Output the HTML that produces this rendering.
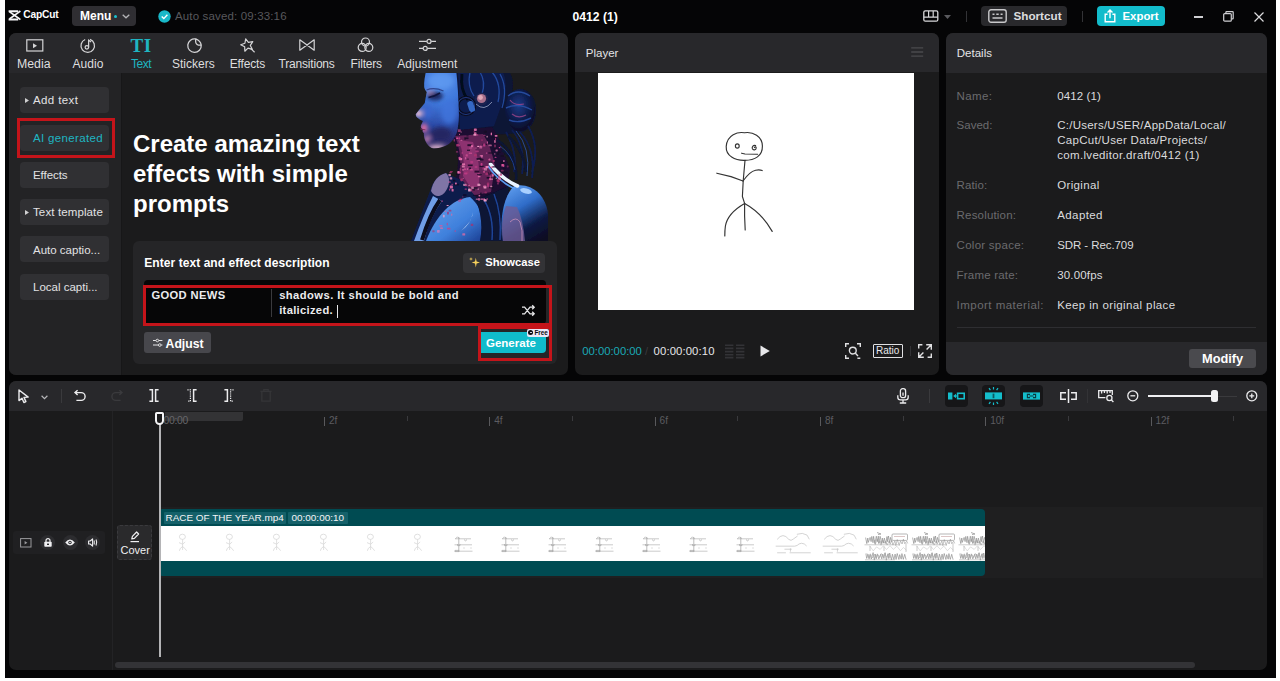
<!DOCTYPE html>
<html lang="en">
<head>
<meta charset="utf-8">
<title>CapCut - 0412 (1)</title>
<style>
*{box-sizing:border-box;margin:0;padding:0}
html,body{width:1280px;height:681px;overflow:hidden;background:#fff}
body{font-family:"Liberation Sans",sans-serif;color:#fff;position:relative}
#app{position:absolute;left:0;top:0;width:1280px;height:681px;overflow:hidden}
#bg{position:absolute;left:5px;top:0;width:1270.6px;height:677.6px;background:#050506}
.abs,.t,.p{position:absolute}
.t{white-space:nowrap;line-height:1;font-size:12px}
.b{font-weight:bold}
.p{background:#1c1c1c;border-radius:7px;overflow:hidden}
.hd{position:absolute;left:0;top:0;right:0;background:#28282b}
.cy{color:#19b8c4}
.g{color:#6b6b6e}
.btn{position:absolute;background:#303033;border-radius:4px}
svg{position:absolute;overflow:visible}
</style>
</head>
<body>
<div id="app">
<div id="bg"></div>
<!-- SECTION:TOPBAR -->
<svg style="left:8px;top:10px" width="13" height="10.6" viewBox="0 0 13 10.6"><path d="M0.6 1.2h9.6M0.6 9.4h9.6" stroke="#f4f4f6" stroke-width="2" fill="none"/><path d="M1.4 1.6 10.6 8.2 12.4 9.6M12.4 1 10.6 2.4 1.4 9" stroke="#f4f4f6" stroke-width="1.7" fill="none"/></svg>
<div class="t b" style="left:23.2px;top:9.6px;font-size:10.2px;letter-spacing:-0.15px">CapCut</div>
<div class="btn" style="left:72px;top:6.3px;width:63.6px;height:20px;background:#2f2e32"></div>
<div class="t b" style="left:80px;top:10.4px;font-size:12px">Menu</div>
<div class="abs" style="left:114px;top:15px;width:3px;height:3px;border-radius:2px;background:#19c3cf"></div>
<svg style="left:122px;top:14px" width="8" height="5" viewBox="0 0 8 5"><path d="M0.7 0.8 4 3.8 7.3 0.8" fill="none" stroke="#b5b5b8" stroke-width="1.3"/></svg>
<svg style="left:158px;top:10px" width="13" height="13" viewBox="0 0 13 13"><circle cx="6.5" cy="6.5" r="6.2" fill="#19b8c8"/><path d="M3.7 6.6 5.8 8.6 9.4 4.7" fill="none" stroke="#fff" stroke-width="1.4"/></svg>
<div class="t" style="left:175px;top:11px;font-size:11.5px;color:#58585c;letter-spacing:0.15px">Auto saved: 09:33:16</div>
<div class="t b" style="left:572.5px;top:11px;font-size:12.2px">0412 (1)</div>
<svg style="left:923px;top:10px" width="16" height="13" viewBox="0 0 16 13"><rect x="0.8" y="0.8" width="14" height="10.4" rx="1.5" fill="none" stroke="#d8d8da" stroke-width="1.3"/><path d="M0.8 7.2h14M5.6 1v6M10.2 1v6" stroke="#d8d8da" stroke-width="1.2"/></svg>
<svg style="left:944px;top:15px" width="7" height="4" viewBox="0 0 7 4"><path d="M0 0h7L3.5 4z" fill="#5a5a5e"/></svg>
<div class="abs" style="left:966px;top:11px;width:1px;height:11px;background:#333336"></div>
<div class="btn" style="left:981.4px;top:6.3px;width:86px;height:20.2px;background:#29292c"></div>
<svg style="left:988px;top:9px" width="19" height="14" viewBox="0 0 19 14"><rect x="0.8" y="0.8" width="17.4" height="12.4" rx="2.2" fill="none" stroke="#c8c8ca" stroke-width="1.4"/><path d="M4.5 5.2h2M8.3 5.2h2.4M12.6 5.2h2M4.5 9h10" stroke="#c8c8ca" stroke-width="1.4"/></svg>
<div class="t b" style="left:1013.5px;top:10.4px;font-size:11.7px;color:#dcdcde">Shortcut</div>
<div class="abs" style="left:1082px;top:11px;width:1px;height:11px;background:#333336"></div>
<div class="btn" style="left:1097px;top:6.3px;width:68px;height:20.2px;background:#12bccb"></div>
<svg style="left:1104px;top:9px" width="12" height="14" viewBox="0 0 12 14"><path d="M3.6 5.2H1.2v7.6h9.6V5.2H8.4M6 9.2V1.2M3.5 3.6 6 1.1 8.5 3.6" fill="none" stroke="#fff" stroke-width="1.4"/></svg>
<div class="t b" style="left:1122.5px;top:10.6px;font-size:11.4px">Export</div>
<div class="abs" style="left:1194px;top:16px;width:9px;height:1.5px;background:#cfcfd2"></div>
<svg style="left:1223px;top:11px" width="11" height="11" viewBox="0 0 11 11"><rect x="0.7" y="2.6" width="7.6" height="7.6" rx="1" fill="none" stroke="#cfcfd2" stroke-width="1.2"/><path d="M2.9 2.4V1.2q0-.6.6-.6h6q.7 0 .7.7v6q0 .6-.6.6H8.6" fill="none" stroke="#cfcfd2" stroke-width="1.2"/></svg>
<svg style="left:1254px;top:12px" width="10" height="10" viewBox="0 0 10 10"><path d="M0.5 0.5 9.5 9.5M9.5 0.5 0.5 9.5" stroke="#dcdcde" stroke-width="1.2"/></svg>
<!-- SECTION:LEFT -->
<div class="p" style="left:9px;top:33px;width:559px;height:342px;background:#1b1b1c">
<div class="hd" style="height:40px;background:#28282b"></div>
<div class="abs" style="left:0;top:40px;width:112px;height:302px;background:#232325"></div>
</div>
<div class="abs" style="left:120.5px;top:73px;width:1px;height:302px;background:#171718"></div>
<!-- tab icons -->
<svg style="left:26px;top:38.6px" width="18" height="14" viewBox="0 0 18 14"><rect x="0.8" y="0.8" width="16" height="11.2" fill="none" stroke="#d4d4d6" stroke-width="1.2"/><path d="M7 4.2v5l4-2.5z" fill="#d4d4d6"/></svg>
<svg style="left:80.3px;top:37.6px" width="15.6" height="15.6" viewBox="0 0 15 15"><path d="M9.6 1.3A6.5 6.5 0 1 1 5 1.4" fill="none" stroke="#d4d4d6" stroke-width="1.2"/><circle cx="6.6" cy="9" r="1.7" fill="none" stroke="#d4d4d6" stroke-width="1.2"/><path d="M8.3 9V2.2l2.4 1.6" fill="none" stroke="#d4d4d6" stroke-width="1.2"/></svg>
<div class="t cy" style="left:130.5px;top:35.5px;font-size:19px;font-weight:bold;font-family:'Liberation Serif',serif;letter-spacing:0.6px;color:#1fb5c2">TI</div>
<svg style="left:186.6px;top:37.8px" width="15" height="15" viewBox="0 0 14 14"><path d="M8.2 0.9A6.3 6.3 0 1 0 13.3 6.6Q12.6 2.6 8.2 0.9zM8.2 0.9Q7.6 5 9.4 6 11 7 13.3 6.6" fill="none" stroke="#d4d4d6" stroke-width="1.2" stroke-linejoin="round"/></svg>
<svg style="left:239.5px;top:37.5px" width="16" height="15" viewBox="0 0 16 15"><g transform="rotate(-14 7 7)"><path d="M7.2 0.8 9 4.8l4.4.4-3.3 3 1 4.3-3.9-2.2-3.8 2.2.9-4.3L1 5.2 5.4 4.8z" fill="none" stroke="#d4d4d6" stroke-width="1.2" stroke-linejoin="round"/></g><path d="M10.6 10.4 14.6 14.2" stroke="#d4d4d6" stroke-width="1.2"/></svg>
<svg style="left:299px;top:39px" width="16" height="12" viewBox="0 0 16 12"><path d="M0.8 0.8v10.4L15.2 0.8v10.4z" fill="none" stroke="#d4d4d6" stroke-width="1.2" stroke-linejoin="round"/></svg>
<svg style="left:357px;top:37px" width="17" height="16" viewBox="0 0 17 16"><circle cx="8.5" cy="5" r="4" fill="none" stroke="#d4d4d6" stroke-width="1.2"/><circle cx="5.2" cy="10.4" r="4" fill="none" stroke="#d4d4d6" stroke-width="1.2"/><circle cx="11.8" cy="10.4" r="4" fill="none" stroke="#d4d4d6" stroke-width="1.2"/></svg>
<svg style="left:419px;top:38px" width="17" height="14" viewBox="0 0 17 14"><path d="M0 3.4h7.8M12.2 3.4H17M0 10.4h4M8.4 10.4h8.600" stroke="#d4d4d6" stroke-width="1.2"/><circle cx="10" cy="3.4" r="2" fill="none" stroke="#d4d4d6" stroke-width="1.2"/><circle cx="6.2" cy="10.4" r="2" fill="none" stroke="#d4d4d6" stroke-width="1.2"/></svg>
<!-- tab labels -->
<div class="t" style="left:17px;top:57.5px;font-size:12.3px;color:#dededf">Media</div>
<div class="t" style="left:72.5px;top:57.5px;color:#dededf;letter-spacing:0.05px">Audio</div>
<div class="t" style="left:131px;top:57.5px;color:#1fb5c2;letter-spacing:-0.45px">Text</div>
<div class="t" style="left:172px;top:57.5px;color:#dededf">Stickers</div>
<div class="t" style="left:229.7px;top:57.5px;color:#dededf;letter-spacing:-0.15px">Effects</div>
<div class="t" style="left:278.6px;top:57.5px;color:#dededf;letter-spacing:-0.2px">Transitions</div>
<div class="t" style="left:350.6px;top:57.5px;color:#dededf;letter-spacing:-0.2px">Filters</div>
<div class="t" style="left:397.3px;top:57.5px;color:#dededf">Adjustment</div>
<!-- sidebar -->
<div class="btn" style="left:20px;top:87px;width:89px;height:26px"></div>
<div class="btn" style="left:20px;top:125px;width:89px;height:26px"></div>
<div class="btn" style="left:20px;top:162px;width:89px;height:26px"></div>
<div class="btn" style="left:20px;top:199px;width:89px;height:26px"></div>
<div class="btn" style="left:20px;top:236px;width:89px;height:26px"></div>
<div class="btn" style="left:20px;top:274px;width:89px;height:26px"></div>
<svg style="left:25px;top:98px" width="4" height="5" viewBox="0 0 4 5"><path d="M0 0 4 2.5 0 5z" fill="#d0d0d2"/></svg>
<svg style="left:25px;top:210px" width="4" height="5" viewBox="0 0 4 5"><path d="M0 0 4 2.5 0 5z" fill="#d0d0d2"/></svg>
<div class="t" style="left:33px;top:94.8px;font-size:11.5px;color:#e2e2e4;letter-spacing:0.38px">Add text</div>
<div class="t" style="left:33px;top:132.8px;font-size:11.5px;color:#1fb5c2;letter-spacing:0.34px">AI generated</div>
<div class="t" style="left:33px;top:169.8px;font-size:11.5px;color:#e2e2e4;letter-spacing:-0.07px">Effects</div>
<div class="t" style="left:33px;top:207.3px;font-size:11.5px;color:#e2e2e4;letter-spacing:0.12px">Text template</div>
<div class="t" style="left:33px;top:244.5px;font-size:11.5px;color:#e2e2e4">Auto captio...</div>
<div class="t" style="left:33px;top:282.0px;font-size:11.5px;color:#e2e2e4">Local capti...</div>
<div class="abs" style="left:16.5px;top:117.5px;width:98.6px;height:40.8px;border:3.2px solid #c4141a"></div>
<!-- hero -->
<div class="t b" style="left:133px;top:128.5px;font-size:24px;line-height:30px;white-space:normal;width:280px">Create amazing text effects with simple prompts</div>
<!-- HERO-IMG -->
<svg style="left:400px;top:73px;overflow:hidden" width="160" height="168.5" viewBox="400 73 160 168.5">
<defs>
<filter id="bl" x="-5%" y="-5%" width="110%" height="110%"><feGaussianBlur stdDeviation="0.7"/></filter>
<filter id="bl2" x="-20%" y="-20%" width="140%" height="140%"><feGaussianBlur stdDeviation="2.2"/></filter>
<radialGradient id="gFace" gradientUnits="userSpaceOnUse" cx="440" cy="82" r="70"><stop offset="0" stop-color="#5690ea"/><stop offset="0.3" stop-color="#4078dc"/><stop offset="0.62" stop-color="#2c4ca8"/><stop offset="0.85" stop-color="#2a2a6c"/><stop offset="1" stop-color="#3c2c66"/></radialGradient>
<linearGradient id="gSh" x1="0.3" y1="0" x2="0.8" y2="1"><stop offset="0" stop-color="#5a98ea"/><stop offset="0.35" stop-color="#2f6cc8"/><stop offset="0.7" stop-color="#0d1a44"/><stop offset="1" stop-color="#080c22"/></linearGradient>
<linearGradient id="gCh" x1="0" y1="0" x2="1" y2="1"><stop offset="0" stop-color="#6ca6ee"/><stop offset="0.6" stop-color="#3f80dc"/><stop offset="1" stop-color="#1a3c90"/></linearGradient>
<radialGradient id="gBun" cx="0.45" cy="0.4" r="0.65"><stop offset="0" stop-color="#1c3a86"/><stop offset="0.6" stop-color="#0c1a48"/><stop offset="1" stop-color="#060a1e"/></radialGradient>
<clipPath id="cF"><path d="M426.2 70c-1.2 6-2.4 11.5-2 17.2.3 1.8 1.4 3.4 2.6 4.8-.8 3.6-1.4 7.2-2 11-2.8 3.8-6.4 7.4-9 11.3-.3 2.6 2.4 4.6 7.1 6.7l-2 4.6c-.5 1.8.6 3.2 2.2 3.9-.9 1.3-.6 2.8.8 3.6-.2 3.5.6 6 1.8 8.3 1.3 2.8 3.2 5 6 6.6 5.8 1.2 12-1.2 17.2-4 3.4-2.6 6-6.6 7.8-11 2-8 2.6-16 2-24-.4-12-1-26-2.6-39z"/></clipPath>
</defs>
<g filter="url(#bl)">
<!-- head back -->
<path d="M452 70h56c5 6 6 14 4 22 10-7 23 0 24 16 1 15-8 25-21 25-10 2-24 2-34-3l-26 6z" fill="#0a1436"/>
<path d="M458 70h44c4 8 5 18 2 28l-10 28-34 4z" fill="#0e1d4e"/>
<ellipse cx="520" cy="110" rx="15" ry="21" fill="url(#gBun)"/>
<path d="M508 96q10-8 22 0M506 108q12-6 26 2M509 120q10 4 22-2" stroke="#2c56b0" stroke-width="1.4" fill="none" opacity="0.8"/>
<path d="M510 100q4 6 14 4M512 114q6 5 14 1" stroke="#b04a90" stroke-width="1.2" fill="none" opacity="0.7"/>
<path d="M470 72q-3 14 4 24M480 72q6 10 2 22M492 72q10 12 6 30M500 74q8 14 2 34" stroke="#2a58b8" stroke-width="1.3" fill="none" opacity="0.75"/>
<path d="M462 74q-2 16 6 26" stroke="#06091c" stroke-width="3" fill="none"/>
<!-- ear -->
<circle cx="466" cy="106" r="8.5" fill="none" stroke="#070b20" stroke-width="3.4"/>
<circle cx="466" cy="106" r="8.5" fill="none" stroke="#28489c" stroke-width="0.8"/>
<rect x="468" y="101" width="6" height="11" rx="2.5" fill="#3468c4" transform="rotate(-18 471 106)"/>
<circle cx="481.5" cy="99" r="6.5" fill="#1c2450"/>
<circle cx="481.5" cy="98.5" r="4.6" fill="#a8708c"/>
<circle cx="480.5" cy="97.5" r="2.4" fill="#e0a8b8"/>
<path d="M476 104q8 8 16-2" stroke="#c8d0e8" stroke-width="1" fill="none" opacity="0.6"/>
<!-- hair strands -->
<path d="M512 130q14 16 10 44M520 132q16 18 12 46M506 132q12 22 8 40M528 126q12 20 4 46" stroke="#0d1d52" stroke-width="1.8" fill="none"/>
<path d="M516 131q15 17 11 45" stroke="#2c56b0" stroke-width="0.8" fill="none"/>
<!-- neck -->
<path d="M450 140l8-10 34-3q8 10 10 22l8 20-4 30-30 6-22-22q8-20 0-43z" fill="#1c0f30"/>
<path d="M455 136q8 18 4 42l12 18 20-4 4-26q-4-20-12-32z" fill="#7a2a64" opacity="0.75"/><path d="M458 140q8 16 5 36l8 12 8-2q2-24-6-44z" fill="#b03c84" opacity="0.55"/><path d="M497 140q14 8 18 26M502 150q16 10 14 30M508 136q16 14 18 36" stroke="#0a1434" stroke-width="2.4" fill="none"/><path d="M500 146q12 8 15 24" stroke="#24489c" stroke-width="0.8" fill="none"/>
<!-- chest left / glass shoulder -->
<path d="M446 173c-8 2-13 8-16 18l-19 50h64l4-40-16-20z" fill="#101c4c"/>
<path d="M446 173c-8 2-13 8-15 18 4 8 12 6 16-2 3-6 3-12-1-16z" fill="#8c7eb0" opacity="0.9"/>
<path d="M433 196q-10 20-19 45h10q6-24 18-40z" fill="#6f9ee6"/>
<path d="M470 197c-18 2-34 18-44 44h56c4-14 2-32-12-44z" fill="url(#gCh)"/>
<path d="M466 226q6-6 7-14-2 12-12 19z" fill="#eef4ff"/>
<path d="M440 200q-10 14-18 40" stroke="#070a1e" stroke-width="4" fill="none"/>
<!-- middle dark -->
<path d="M476 200l32-14 8 55h-36q4-20-4-41z" fill="#0a1234"/>
<path d="M484 200q10 16 8 40M494 194q8 20 6 46" stroke="#1f4496" stroke-width="1.5" fill="none"/>
<!-- right shoulder -->
<path d="M514 186c16-4 32 8 34 28v28h-46c-2-20 0-44 12-56z" fill="url(#gSh)"/>
<path d="M506 206q-6 16-3 35h22q-2-22-8-34z" fill="#6e5c96" opacity="0.8"/>
<path d="M510 222q6-6 10 0 3 8 2 19" stroke="#c890b8" stroke-width="1" fill="none" opacity="0.8"/>
<ellipse cx="526" cy="191" rx="6" ry="2.6" fill="#a8d0ff" transform="rotate(14 526 191)"/>
<path d="M490.5 164q10 14 27 22" stroke="#eaf4ff" stroke-width="3.6" fill="none" stroke-linecap="round"/>
<path d="M488 166q10 15 27 23" stroke="#5a9cf0" stroke-width="1.6" fill="none"/>
<!-- blotches -->
<rect x="476.3" y="158.3" width="3.9" height="1.2" fill="#120a24" opacity="0.8"/><rect x="467.4" y="144.2" width="4.1" height="1.9" fill="#120a24" opacity="0.8"/><rect x="482.6" y="143.8" width="4.3" height="1.3" fill="#120a24" opacity="0.8"/><rect x="464.3" y="137.3" width="4.2" height="1.8" fill="#120a24" opacity="0.8"/><rect x="488.8" y="161.8" width="3.5" height="1.1" fill="#120a24" opacity="0.8"/><rect x="489.1" y="186.9" width="4.4" height="1.4" fill="#120a24" opacity="0.8"/><rect x="469.1" y="167.5" width="1.9" height="1.8" fill="#120a24" opacity="0.8"/><rect x="472.6" y="189.2" width="2.4" height="1.3" fill="#120a24" opacity="0.8"/><rect x="466.7" y="158.7" width="2.2" height="0.8" fill="#120a24" opacity="0.8"/><rect x="493.9" y="148.2" width="2.4" height="1.2" fill="#120a24" opacity="0.8"/><rect x="479.8" y="158.9" width="3.7" height="1.6" fill="#120a24" opacity="0.8"/><rect x="473.0" y="194.9" width="4.5" height="0.9" fill="#120a24" opacity="0.8"/><rect x="500.2" y="173.6" width="1.6" height="0.8" fill="#120a24" opacity="0.8"/><rect x="466.5" y="135.3" width="2.0" height="1.1" fill="#120a24" opacity="0.8"/><rect x="497.0" y="152.9" width="2.0" height="1.9" fill="#120a24" opacity="0.8"/><rect x="503.7" y="171.8" width="4.2" height="1.6" fill="#120a24" opacity="0.8"/><rect x="492.2" y="166.2" width="4.1" height="1.3" fill="#120a24" opacity="0.8"/><rect x="503.2" y="168.0" width="2.4" height="1.1" fill="#120a24" opacity="0.8"/><rect x="460.1" y="163.5" width="1.7" height="1.4" fill="#120a24" opacity="0.8"/><rect x="460.4" y="163.4" width="3.2" height="1.4" fill="#120a24" opacity="0.8"/><rect x="500.8" y="161.7" width="3.5" height="1.6" fill="#120a24" opacity="0.8"/><rect x="500.8" y="155.0" width="3.0" height="2.0" fill="#120a24" opacity="0.8"/><rect x="456.4" y="173.9" width="3.7" height="0.8" fill="#120a24" opacity="0.8"/><rect x="487.4" y="177.1" width="4.8" height="1.2" fill="#120a24" opacity="0.8"/><rect x="480.1" y="192.6" width="1.6" height="1.7" fill="#120a24" opacity="0.8"/><rect x="488.3" y="152.4" width="4.5" height="1.2" fill="#120a24" opacity="0.8"/><rect x="479.5" y="165.8" width="4.2" height="1.1" fill="#120a24" opacity="0.8"/><rect x="477.2" y="158.4" width="3.4" height="1.8" fill="#120a24" opacity="0.8"/><rect x="469.0" y="187.6" width="2.9" height="1.4" fill="#120a24" opacity="0.8"/><rect x="467.8" y="164.5" width="4.9" height="1.6" fill="#120a24" opacity="0.8"/><rect x="497.9" y="151.8" width="2.6" height="1.2" fill="#120a24" opacity="0.8"/><rect x="486.0" y="173.7" width="4.2" height="0.8" fill="#120a24" opacity="0.8"/><rect x="483.6" y="131.6" width="2.6" height="0.8" fill="#120a24" opacity="0.8"/><rect x="463.0" y="194.3" width="3.6" height="1.6" fill="#120a24" opacity="0.8"/><rect x="487.5" y="172.4" width="3.7" height="1.6" fill="#120a24" opacity="0.8"/><rect x="486.6" y="177.0" width="2.2" height="1.6" fill="#120a24" opacity="0.8"/><rect x="478.6" y="182.9" width="1.9" height="1.0" fill="#120a24" opacity="0.8"/><rect x="454.1" y="183.8" width="4.7" height="1.6" fill="#120a24" opacity="0.8"/><rect x="473.4" y="187.2" width="4.3" height="1.5" fill="#120a24" opacity="0.8"/><rect x="467.0" y="149.7" width="3.0" height="1.2" fill="#120a24" opacity="0.8"/><rect x="477.0" y="174.2" width="4.8" height="0.9" fill="#120a24" opacity="0.8"/><rect x="484.9" y="130.8" width="1.9" height="1.8" fill="#120a24" opacity="0.8"/><rect x="485.4" y="194.1" width="3.1" height="0.8" fill="#120a24" opacity="0.8"/><rect x="474.5" y="170.6" width="4.8" height="2.0" fill="#120a24" opacity="0.8"/><rect x="479.6" y="157.7" width="1.9" height="1.6" fill="#120a24" opacity="0.8"/><rect x="464.3" y="138.9" width="1.6" height="0.8" fill="#120a24" opacity="0.8"/><rect x="491.7" y="136.8" width="4.9" height="0.9" fill="#120a24" opacity="0.8"/><rect x="453.0" y="179.8" width="2.3" height="1.7" fill="#120a24" opacity="0.8"/>
<rect x="457.4" y="144.6" width="2.6" height="1.1" rx="0.6" fill="#d86aa6" opacity="0.59"/><rect x="449.1" y="188.6" width="1.1" height="2.1" rx="0.6" fill="#c8408a" opacity="0.83"/><rect x="483.3" y="134.8" width="2.4" height="1.1" rx="0.6" fill="#c8408a" opacity="0.57"/><rect x="483.2" y="198.3" width="1.9" height="2.1" rx="0.6" fill="#e0559c" opacity="0.8"/><rect x="486.9" y="182.6" width="2.3" height="2.6" rx="0.6" fill="#a8306e" opacity="0.81"/><rect x="470.3" y="161.0" width="2.9" height="2.4" rx="0.6" fill="#c8408a" opacity="0.59"/><rect x="455.0" y="182.5" width="1.8" height="1.9" rx="0.6" fill="#d86aa6" opacity="0.99"/><rect x="473.9" y="132.3" width="2.6" height="2.5" rx="0.6" fill="#d86aa6" opacity="0.91"/><rect x="506.8" y="165.4" width="1.8" height="2.0" rx="0.6" fill="#a8306e" opacity="0.58"/><rect x="494.7" y="135.1" width="2.8" height="1.6" rx="0.6" fill="#d86aa6" opacity="1.00"/><rect x="471.2" y="146.5" width="1.3" height="1.1" rx="0.6" fill="#f07ab4" opacity="0.61"/><rect x="449.8" y="171.0" width="3.1" height="1.2" rx="0.6" fill="#a8306e" opacity="0.73"/><rect x="468.1" y="188.5" width="2.7" height="3.0" rx="0.6" fill="#f4a0c8" opacity="0.95"/><rect x="448.3" y="181.3" width="2.4" height="1.5" rx="0.6" fill="#e0559c" opacity="0.62"/><rect x="478.5" y="195.1" width="1.8" height="1.3" rx="0.6" fill="#d86aa6" opacity="0.98"/><rect x="470.7" y="223.8" width="2.6" height="2.1" rx="0.6" fill="#a8306e" opacity="0.73"/><rect x="459.0" y="133.8" width="1.0" height="1.3" rx="0.6" fill="#e0559c" opacity="0.98"/><rect x="486.4" y="135.7" width="1.5" height="1.8" rx="0.6" fill="#f4a0c8" opacity="0.66"/><rect x="459.7" y="168.1" width="1.3" height="2.7" rx="0.6" fill="#a8306e" opacity="0.77"/><rect x="456.2" y="143.9" width="2.8" height="2.5" rx="0.6" fill="#a8306e" opacity="0.92"/><rect x="494.6" y="156.7" width="1.9" height="1.3" rx="0.6" fill="#c8408a" opacity="0.79"/><rect x="502.9" y="164.3" width="1.5" height="2.6" rx="0.6" fill="#c8408a" opacity="0.91"/><rect x="460.6" y="131.2" width="1.1" height="1.6" rx="0.6" fill="#f07ab4" opacity="0.64"/><rect x="485.5" y="165.9" width="2.9" height="2.4" rx="0.6" fill="#f07ab4" opacity="0.98"/><rect x="461.5" y="152.3" width="1.5" height="1.4" rx="0.6" fill="#c8408a" opacity="0.77"/><rect x="459.4" y="198.7" width="3.0" height="1.2" rx="0.6" fill="#a8306e" opacity="0.9"/><rect x="442.9" y="214.8" width="1.8" height="2.6" rx="0.6" fill="#f4a0c8" opacity="0.73"/><rect x="440.1" y="227.5" width="2.9" height="1.3" rx="0.6" fill="#d86aa6" opacity="0.99"/><rect x="490.7" y="166.5" width="2.3" height="1.3" rx="0.6" fill="#e0559c" opacity="0.91"/><rect x="501.4" y="163.9" width="2.3" height="2.7" rx="0.6" fill="#e0559c" opacity="0.96"/><rect x="460.4" y="178.4" width="2.4" height="2.8" rx="0.6" fill="#a8306e" opacity="0.92"/><rect x="486.9" y="141.2" width="1.1" height="2.4" rx="0.6" fill="#d86aa6" opacity="0.8"/><rect x="481.0" y="155.3" width="1.7" height="2.5" rx="0.6" fill="#d86aa6" opacity="0.75"/><rect x="449.8" y="185.6" width="3.1" height="2.9" rx="0.6" fill="#d86aa6" opacity="0.95"/><rect x="466.7" y="171.2" width="1.8" height="2.3" rx="0.6" fill="#a8306e" opacity="0.58"/><rect x="439.3" y="225.1" width="3.3" height="1.4" rx="0.6" fill="#e0559c" opacity="0.73"/><rect x="468.2" y="184.7" width="1.8" height="1.4" rx="0.6" fill="#f07ab4" opacity="0.59"/><rect x="461.6" y="165.2" width="2.1" height="2.4" rx="0.6" fill="#a8306e" opacity="0.7"/><rect x="487.4" y="184.3" width="1.2" height="3.0" rx="0.6" fill="#c8408a" opacity="0.99"/><rect x="495.0" y="137.8" width="1.1" height="2.4" rx="0.6" fill="#a8306e" opacity="0.95"/><rect x="485.8" y="152.5" width="1.6" height="1.2" rx="0.6" fill="#e0559c" opacity="0.7"/><rect x="475.0" y="147.6" width="1.8" height="1.0" rx="0.6" fill="#f07ab4" opacity="0.57"/><rect x="449.6" y="177.2" width="2.6" height="2.3" rx="0.6" fill="#f4a0c8" opacity="0.77"/><rect x="488.6" y="172.5" width="1.8" height="1.1" rx="0.6" fill="#c8408a" opacity="0.56"/><rect x="463.1" y="183.7" width="3.3" height="2.2" rx="0.6" fill="#f4a0c8" opacity="0.68"/><rect x="470.9" y="145.3" width="2.1" height="1.5" rx="0.6" fill="#f07ab4" opacity="0.99"/><rect x="479.7" y="154.9" width="3.3" height="1.6" rx="0.6" fill="#f07ab4" opacity="0.63"/><rect x="458.5" y="137.2" width="1.7" height="2.3" rx="0.6" fill="#c8408a" opacity="0.78"/><rect x="483.6" y="186.2" width="2.8" height="2.3" rx="0.6" fill="#f4a0c8" opacity="0.9"/><rect x="497.1" y="182.4" width="1.7" height="2.2" rx="0.6" fill="#c8408a" opacity="0.57"/><rect x="477.4" y="183.5" width="3.0" height="2.6" rx="0.6" fill="#f4a0c8" opacity="0.81"/><rect x="494.3" y="153.3" width="1.1" height="1.3" rx="0.6" fill="#f07ab4" opacity="0.98"/><rect x="462.7" y="177.7" width="1.1" height="1.0" rx="0.6" fill="#d86aa6" opacity="0.86"/><rect x="473.9" y="128.4" width="2.9" height="2.5" rx="0.6" fill="#d86aa6" opacity="0.95"/><rect x="490.0" y="178.6" width="3.0" height="1.2" rx="0.6" fill="#f4a0c8" opacity="0.68"/><rect x="458.2" y="199.7" width="2.7" height="2.2" rx="0.6" fill="#c8408a" opacity="0.56"/><rect x="492.6" y="160.0" width="2.2" height="1.9" rx="0.6" fill="#a8306e" opacity="0.9"/><rect x="456.2" y="137.4" width="2.1" height="1.6" rx="0.6" fill="#e0559c" opacity="0.92"/><rect x="483.1" y="143.6" width="2.3" height="2.9" rx="0.6" fill="#c8408a" opacity="0.82"/><rect x="488.2" y="158.8" width="1.3" height="1.7" rx="0.6" fill="#a8306e" opacity="0.95"/><rect x="473.6" y="130.7" width="1.0" height="2.0" rx="0.6" fill="#a8306e" opacity="0.73"/><rect x="497.7" y="173.8" width="1.9" height="1.2" rx="0.6" fill="#f07ab4" opacity="0.55"/><rect x="437.0" y="229.9" width="2.7" height="2.8" rx="0.6" fill="#f07ab4" opacity="0.66"/><rect x="488.5" y="144.4" width="3.3" height="1.9" rx="0.6" fill="#f07ab4" opacity="0.64"/><rect x="462.3" y="233.2" width="2.9" height="2.3" rx="0.6" fill="#d86aa6" opacity="0.8"/><rect x="498.2" y="177.6" width="2.8" height="2.3" rx="0.6" fill="#f07ab4" opacity="0.77"/><rect x="465.6" y="154.3" width="2.2" height="2.3" rx="0.6" fill="#e0559c" opacity="0.63"/><rect x="447.0" y="227.7" width="3.4" height="1.9" rx="0.6" fill="#c8408a" opacity="0.8"/><rect x="480.6" y="163.1" width="1.9" height="2.6" rx="0.6" fill="#c8408a" opacity="0.95"/><rect x="500.0" y="173.4" width="2.0" height="2.0" rx="0.6" fill="#a8306e" opacity="0.67"/><rect x="482.4" y="167.6" width="2.6" height="2.1" rx="0.6" fill="#c8408a" opacity="0.59"/><rect x="489.6" y="175.5" width="1.7" height="2.6" rx="0.6" fill="#e0559c" opacity="0.61"/><rect x="432.3" y="230.3" width="2.3" height="1.9" rx="0.6" fill="#a8306e" opacity="0.66"/><rect x="470.7" y="188.7" width="1.1" height="2.6" rx="0.6" fill="#c8408a" opacity="0.81"/><rect x="477.8" y="176.1" width="2.8" height="1.2" rx="0.6" fill="#f07ab4" opacity="0.79"/><rect x="483.3" y="170.7" width="1.5" height="2.2" rx="0.6" fill="#e0559c" opacity="0.79"/><rect x="477.6" y="188.2" width="1.1" height="1.8" rx="0.6" fill="#f4a0c8" opacity="0.69"/><rect x="492.4" y="174.2" width="1.6" height="2.3" rx="0.6" fill="#f07ab4" opacity="0.65"/><rect x="475.5" y="150.6" width="3.3" height="1.6" rx="0.6" fill="#c8408a" opacity="0.65"/><rect x="447.1" y="211.7" width="1.7" height="2.9" rx="0.6" fill="#a8306e" opacity="0.82"/><rect x="490.2" y="185.7" width="2.1" height="1.6" rx="0.6" fill="#f4a0c8" opacity="0.72"/><rect x="462.4" y="164.5" width="1.4" height="1.0" rx="0.6" fill="#f07ab4" opacity="0.59"/><rect x="500.9" y="169.8" width="2.8" height="1.6" rx="0.6" fill="#a8306e" opacity="0.59"/><rect x="495.5" y="149.5" width="2.3" height="1.9" rx="0.6" fill="#f07ab4" opacity="0.71"/><rect x="458.9" y="158.0" width="3.3" height="2.2" rx="0.6" fill="#f07ab4" opacity="0.89"/><rect x="496.6" y="179.2" width="2.9" height="2.6" rx="0.6" fill="#a8306e" opacity="0.92"/><rect x="494.2" y="144.6" width="1.6" height="2.7" rx="0.6" fill="#a8306e" opacity="0.71"/><rect x="444.7" y="210.8" width="1.6" height="1.1" rx="0.6" fill="#e0559c" opacity="0.77"/><rect x="479.5" y="145.7" width="2.0" height="1.2" rx="0.6" fill="#e0559c" opacity="0.67"/><rect x="448.4" y="173.9" width="2.5" height="2.3" rx="0.6" fill="#f4a0c8" opacity="0.79"/><rect x="503.0" y="160.3" width="1.7" height="1.5" rx="0.6" fill="#f07ab4" opacity="0.88"/><rect x="457.6" y="171.6" width="3.4" height="2.0" rx="0.6" fill="#c8408a" opacity="0.84"/><rect x="469.8" y="169.1" width="3.1" height="1.5" rx="0.6" fill="#e0559c" opacity="0.64"/><rect x="451.0" y="213.6" width="1.3" height="2.2" rx="0.6" fill="#d86aa6" opacity="0.71"/><rect x="462.2" y="196.3" width="1.2" height="1.1" rx="0.6" fill="#a8306e" opacity="0.8"/><rect x="464.5" y="188.5" width="2.5" height="1.2" rx="0.6" fill="#c8408a" opacity="0.73"/><rect x="491.8" y="174.0" width="1.1" height="2.5" rx="0.6" fill="#f07ab4" opacity="0.74"/><rect x="464.1" y="172.5" width="3.3" height="1.9" rx="0.6" fill="#c8408a" opacity="0.74"/><rect x="480.2" y="198.5" width="3.2" height="1.2" rx="0.6" fill="#d86aa6" opacity="0.97"/><rect x="498.7" y="146.9" width="1.8" height="1.3" rx="0.6" fill="#c8408a" opacity="0.97"/><rect x="473.3" y="133.9" width="3.2" height="1.8" rx="0.6" fill="#f4a0c8" opacity="0.83"/><rect x="465.0" y="185.0" width="1.9" height="1.2" rx="0.6" fill="#c8408a" opacity="0.99"/><rect x="457.4" y="170.9" width="2.1" height="2.7" rx="0.6" fill="#f07ab4" opacity="0.84"/><rect x="463.9" y="168.4" width="2.2" height="1.4" rx="0.6" fill="#e0559c" opacity="0.83"/><rect x="474.0" y="153.9" width="2.8" height="2.6" rx="0.6" fill="#a8306e" opacity="0.93"/><rect x="490.7" y="132.5" width="1.3" height="2.8" rx="0.6" fill="#f07ab4" opacity="0.9"/><rect x="476.1" y="134.0" width="2.2" height="1.8" rx="0.6" fill="#c8408a" opacity="0.56"/><rect x="494.3" y="140.1" width="1.3" height="2.8" rx="0.6" fill="#f07ab4" opacity="0.98"/><rect x="451.3" y="183.7" width="1.8" height="1.1" rx="0.6" fill="#c8408a" opacity="0.73"/><rect x="488.7" y="158.6" width="1.8" height="1.8" rx="0.6" fill="#f07ab4" opacity="0.6"/><rect x="478.1" y="198.0" width="1.9" height="2.7" rx="0.6" fill="#d86aa6" opacity="0.78"/><rect x="462.1" y="169.3" width="1.9" height="1.3" rx="0.6" fill="#f07ab4" opacity="0.89"/><rect x="469.2" y="147.4" width="2.8" height="1.1" rx="0.6" fill="#d86aa6" opacity="0.66"/><rect x="456.3" y="128.2" width="1.1" height="1.3" rx="0.6" fill="#d86aa6" opacity="0.83"/><rect x="466.8" y="168.1" width="1.1" height="2.0" rx="0.6" fill="#d86aa6" opacity="0.84"/><rect x="460.5" y="139.7" width="1.9" height="1.4" rx="0.6" fill="#d86aa6" opacity="0.69"/><rect x="495.7" y="177.6" width="1.2" height="1.3" rx="0.6" fill="#f4a0c8" opacity="0.9"/><rect x="465.2" y="157.1" width="1.0" height="2.3" rx="0.6" fill="#d86aa6" opacity="0.95"/><rect x="484.5" y="191.6" width="2.4" height="2.0" rx="0.6" fill="#a8306e" opacity="0.66"/><rect x="478.2" y="172.7" width="1.6" height="1.1" rx="0.6" fill="#e0559c" opacity="0.56"/><rect x="475.7" y="198.6" width="3.0" height="1.3" rx="0.6" fill="#f07ab4" opacity="0.58"/><rect x="497.4" y="180.6" width="2.3" height="1.8" rx="0.6" fill="#a8306e" opacity="0.89"/><rect x="451.6" y="188.9" width="2.0" height="2.6" rx="0.6" fill="#d86aa6" opacity="0.99"/><rect x="454.6" y="230.1" width="1.2" height="2.0" rx="0.6" fill="#c8408a" opacity="0.67"/><rect x="448.6" y="209.8" width="2.8" height="1.7" rx="0.6" fill="#a8306e" opacity="0.7"/><rect x="455.8" y="151.3" width="2.5" height="1.2" rx="0.6" fill="#c8408a" opacity="0.62"/><rect x="484.0" y="168.0" width="3.0" height="2.6" rx="0.6" fill="#f4a0c8" opacity="0.58"/><rect x="453.7" y="139.0" width="1.2" height="2.5" rx="0.6" fill="#c8408a" opacity="0.68"/><rect x="458.7" y="156.7" width="1.8" height="2.9" rx="0.6" fill="#e0559c" opacity="0.87"/><rect x="461.8" y="163.3" width="3.3" height="2.0" rx="0.6" fill="#f07ab4" opacity="0.83"/><rect x="446.7" y="222.8" width="1.2" height="2.6" rx="0.6" fill="#c8408a" opacity="0.75"/><rect x="477.4" y="159.7" width="2.8" height="1.1" rx="0.6" fill="#f07ab4" opacity="0.77"/><rect x="474.5" y="166.2" width="3.0" height="1.5" rx="0.6" fill="#c8408a" opacity="0.68"/><rect x="446.5" y="204.9" width="2.2" height="1.2" rx="0.6" fill="#f4a0c8" opacity="0.9"/><rect x="481.1" y="139.5" width="1.8" height="1.2" rx="0.6" fill="#a8306e" opacity="0.95"/><rect x="499.5" y="174.4" width="2.6" height="1.7" rx="0.6" fill="#f07ab4" opacity="0.67"/><rect x="471.1" y="186.5" width="2.8" height="2.5" rx="0.6" fill="#f4a0c8" opacity="0.57"/><rect x="483.2" y="185.4" width="3.1" height="1.9" rx="0.6" fill="#d86aa6" opacity="0.88"/><rect x="477.2" y="145.7" width="1.8" height="1.4" rx="0.6" fill="#f4a0c8" opacity="1.00"/><rect x="441.5" y="200.4" width="1.5" height="1.3" rx="0.6" fill="#c8408a" opacity="0.91"/><rect x="498.3" y="175.8" width="1.5" height="2.3" rx="0.6" fill="#e0559c" opacity="0.68"/><rect x="468.7" y="152.5" width="3.4" height="1.6" rx="0.6" fill="#e0559c" opacity="0.61"/><rect x="485.4" y="172.5" width="2.8" height="2.8" rx="0.6" fill="#a8306e" opacity="0.87"/><rect x="483.7" y="199.2" width="3.0" height="2.3" rx="0.6" fill="#f4a0c8" opacity="0.95"/><rect x="489.2" y="177.9" width="1.8" height="2.3" rx="0.6" fill="#e0559c" opacity="0.95"/><rect x="449.2" y="172.0" width="2.7" height="1.3" rx="0.6" fill="#a8306e" opacity="0.77"/><rect x="457.8" y="129.2" width="3.0" height="2.8" rx="0.6" fill="#e0559c" opacity="0.57"/><rect x="479.3" y="145.7" width="2.9" height="2.9" rx="0.6" fill="#d86aa6" opacity="0.71"/><rect x="462.0" y="165.7" width="2.8" height="1.9" rx="0.6" fill="#f4a0c8" opacity="0.63"/><rect x="486.4" y="198.1" width="1.6" height="1.8" rx="0.6" fill="#e0559c" opacity="0.56"/>
<!-- face -->
<path d="M426.2 70c-1.2 6-2.4 11.5-2 17.2.3 1.8 1.4 3.4 2.6 4.8-.8 3.6-1.4 7.2-2 11-2.8 3.8-6.4 7.4-9 11.3-.3 2.6 2.4 4.6 7.1 6.7l-2 4.6c-.5 1.8.6 3.2 2.2 3.9-.9 1.3-.6 2.8.8 3.6-.2 3.5.6 6 1.8 8.3 1.3 2.8 3.2 5 6 6.6 5.8 1.2 12-1.2 17.2-4 3.4-2.6 6-6.6 7.8-11 2-8 2.6-16 2-24-.4-12-1-26-2.6-39z" fill="url(#gFace)"/>
</g>
<g clip-path="url(#cF)"><g filter="url(#bl2)">
<ellipse cx="441" cy="81" rx="13" ry="8" fill="#5e98f0" opacity="0.8"/>
<ellipse cx="449" cy="112" rx="8" ry="12" fill="#3f74dc" opacity="0.85"/>
<ellipse cx="435" cy="96" rx="8" ry="4.5" fill="#182258" opacity="0.95"/>
<ellipse cx="441" cy="134" rx="11" ry="7" fill="#26265e" opacity="0.9"/>
<ellipse cx="428" cy="112" rx="3.5" ry="7" fill="#3a66d0" opacity="0.9"/>
<ellipse cx="418.5" cy="113.5" rx="4" ry="3.6" fill="#f2c0d4"/>
<ellipse cx="424" cy="128" rx="3.6" ry="4.5" fill="#e070a4"/>
<ellipse cx="427" cy="139" rx="3.5" ry="4" fill="#c080b0" opacity="0.9"/>
<ellipse cx="437" cy="147.5" rx="9" ry="2.6" fill="#f0c4d8"/>
<ellipse cx="430" cy="92" rx="4" ry="2" fill="#c090b8" opacity="0.7"/>
</g></g>
<g filter="url(#bl)">
<path d="M428.5 97.5q6-1 11.5-4.5" stroke="#0c1440" stroke-width="1.6" fill="none"/>
<path d="M426.5 90q8-3 17 1" stroke="#1c2a6c" stroke-width="1.2" fill="none" opacity="0.7"/>
<path d="M420.4 129l5 .8" stroke="#7a2c5c" stroke-width="0.9"/>
</g>
</svg>
<div class="abs" style="left:133px;top:241px;width:424px;height:123px;background:#252527;border-radius:6px"></div>
<div class="t b" style="left:144.3px;top:257px;font-size:12px;letter-spacing:0.06px">Enter text and effect description</div>
<div class="btn" style="left:463px;top:252.6px;width:82.4px;height:20px;background:#333336"></div>
<div class="t b" style="left:485.2px;top:257.2px;font-size:11.2px">Showcase</div>
<svg style="left:469px;top:257.4px" width="11" height="10.6" viewBox="0 0 11 10.6"><path d="M6.8 0.8 7.6 4.6 11 5.6 7.6 6.6 6.8 10.4 6 6.6 2.6 5.6 6 4.6z" fill="#f6d05c"/><path d="M2 0 2.4 1.6 4 2 2.4 2.4 2 4 1.6 2.4 0 2 1.6 1.6z" fill="#f6d05c"/></svg>
<div class="abs" style="left:144px;top:280px;width:402px;height:44px;background:#060607;border-radius:4px"></div>
<div class="abs" style="left:270.8px;top:288.7px;width:1px;height:28.6px;background:#3a3a3d"></div>
<div class="t b" style="left:151.4px;top:290.3px;font-size:11.2px;color:#ececee;letter-spacing:0.36px">GOOD NEWS</div>
<div class="t b" style="left:279.2px;top:290.3px;font-size:11.2px;color:#ececee;letter-spacing:0.44px">shadows. It should be bold and</div>
<div class="t b" style="left:279.2px;top:305px;font-size:11.2px;color:#ececee;letter-spacing:0.31px">italicized.</div>
<div class="abs" style="left:337.3px;top:305px;width:1px;height:12.5px;background:#e8e8ea"></div>
<svg style="left:522px;top:305px" width="13" height="11" viewBox="0 0 13 11"><path d="M0 2.2h2.6L8 8.8h4M0 8.8h2.6L8 2.2h4M10.2 0.2l2 2-2 2M10.2 6.8l2 2-2 2" fill="none" stroke="#e6e6e8" stroke-width="1.3"/></svg>
<div class="abs" style="left:143px;top:284.6px;width:409.2px;height:41.1px;border:3.3px solid #c4141a"></div>
<div class="btn" style="left:143.8px;top:332.4px;width:67.4px;height:20.6px;background:#47474c;border-radius:3px"></div>
<svg style="left:153px;top:338px" width="9.4" height="9.6" viewBox="0 0 10 10"><path d="M0 2.6h3M6.4 2.6H10M0 7.4h5.6M8.8 7.4H10" stroke="#e6e6e8" stroke-width="1.1"/><circle cx="4.6" cy="2.6" r="1.4" fill="none" stroke="#e6e6e8" stroke-width="1"/><circle cx="7.2" cy="7.4" r="1.4" fill="none" stroke="#e6e6e8" stroke-width="1"/></svg>
<div class="t b" style="left:165.6px;top:337.6px;font-size:12.2px">Adjust</div>
<div class="btn" style="left:480.8px;top:332.4px;width:65.2px;height:20.6px;background:#10bccb;border-radius:0 0 4px 0"></div>
<div class="t b" style="left:486px;top:337.6px;font-size:11.5px">Generate</div>
<div class="abs" style="left:527px;top:329.3px;width:21.6px;height:7.4px;background:#ebe8f8;border-radius:2px"></div>
<div class="abs" style="left:528.4px;top:330.4px;width:5px;height:5px;border-radius:3px;background:#0c0c10"></div>
<div class="abs" style="left:530.2px;top:331.5px;width:1.6px;height:1.6px;border-radius:1px;background:#ebe8f8"></div>
<div class="t b" style="left:534.4px;top:330px;font-size:6.4px;color:#0c0c10">Free</div>
<div class="abs" style="left:477.7px;top:326.2px;width:74.5px;height:34.4px;border:3.3px solid #c4141a"></div>
<!-- SECTION:PLAYER -->
<div class="p" style="left:574.5px;top:33px;width:364.3px;height:342px;background:#1b1b1c">
<div class="hd" style="height:39.4px;background:#28282b"></div>
</div>
<div class="t" style="left:585.8px;top:47.7px;font-size:11.5px;color:#e4e4e6">Player</div>
<svg style="left:911px;top:47px" width="12.4" height="10" viewBox="0 0 12 10"><path d="M0 0.8h12M0 5h12M0 9.2h12" stroke="#4a4a4e" stroke-width="1.3"/></svg>
<div class="abs" style="left:597.5px;top:73.2px;width:316.8px;height:237px;background:#fff"></div>
<svg style="left:690px;top:110px" width="120" height="140" viewBox="690 110 120 140" fill="none" stroke="#333" stroke-width="1.15" stroke-linecap="round" stroke-linejoin="round">
<path d="M744.5 132.8C738 131.6 727 134.5 726.2 146.5 725.8 156 735 160.6 744.5 160.4 755 160.2 762.6 156 762.4 146 762.2 136.5 753 131.4 744.5 132.8z"/>
<ellipse cx="737.3" cy="146" rx="1.9" ry="2.1"/>
<path d="M755.6 145.6C753.4 144.6 751.6 146.8 752.4 148.8 753.2 150.6 756 150.2 756.2 148 756.3 146.6 755 146.4 754.4 147.6"/>
<path d="M741.6 153.2 745 154 757.6 154.2"/>
<path d="M745 160.4 743.2 181 742.4 196.5 744.6 203.4"/>
<path d="M716.8 173.2 731 176.6 743 181"/>
<path d="M743 181C746.5 176 750 171.4 755.6 170.2 758.4 169.6 760.6 169.8 762.2 170.6"/>
<path d="M744.6 203.4C734 209.5 726.8 217.5 725.4 226 724.8 230 724.8 233 724.8 236"/>
<path d="M744.6 203.4 744.6 216 745.2 230"/>
<path d="M744.6 203.4C755 209 765.5 219.5 772.2 231.4"/>
</svg>
<div class="t" style="left:582.2px;top:346px;font-size:11.3px;color:#1aa9b5">00:00:00:00</div>
<div class="t" style="left:645px;top:346px;font-size:11px;color:#3a3a3d">/</div>
<div class="t" style="left:653.6px;top:346px;font-size:11.3px;color:#e6e6e8;letter-spacing:0.12px">00:00:00:10</div>
<svg style="left:725px;top:344px" width="20" height="14" viewBox="0 0 20 14"><path d="M0 1.2h8.4M0 4.4h8.4M0 7.6h8.4M0 10.8h8.4M0 13.6h8.4M11 1.2h8.4M11 4.4h8.4M11 7.6h8.4M11 10.8h8.4M11 13.6h8.4" stroke="#333336" stroke-width="1.6"/></svg>
<svg style="left:760px;top:345px" width="10" height="12" viewBox="0 0 10 12"><path d="M0.5 0.5 9.8 6 0.5 11.5z" fill="#e8e8ea"/></svg>
<svg style="left:845px;top:343px" width="16" height="16" viewBox="0 0 16 16" fill="none" stroke="#e0e0e2" stroke-width="1.4"><path d="M0.7 4V0.7H4M12 0.7h3.3V4M0.7 12v3.3H4M12.4 15.3h2.9"/><circle cx="7.8" cy="7.6" r="3.4"/><path d="M10.4 10.2 13 13"/></svg>
<div class="abs" style="left:873px;top:344px;width:30px;height:14px;border:1.3px solid #e0e0e2;border-radius:1px"></div>
<div class="t" style="left:876px;top:346px;font-size:10px;color:#e8e8ea">Ratio</div>
<div class="abs" style="left:910px;top:346px;width:1px;height:10px;background:#333336"></div>
<svg style="left:918px;top:344px" width="14" height="14" viewBox="0 0 14 14" fill="none" stroke="#e0e0e2" stroke-width="1.4"><path d="M0.7 4.4V0.7H4.4M13.3 9.6v3.7H9.6M8.2 0.7h5.1V5.8M13 1 8.6 5.4M5.8 13.3H0.7V8.2M1 13 5.4 8.6"/></svg>
<!-- SECTION:DETAILS -->
<div class="p" style="left:946px;top:33px;width:321px;height:342px;background:#1b1b1c">
<div class="hd" style="height:40px;background:#28282b"></div>
<div class="abs" style="left:0;top:309px;width:321px;height:33px;background:#28282b"></div>
<div class="abs" style="left:11px;top:294px;width:299px;height:1px;background:#2e2e31"></div>
</div>
<div class="t" style="left:956.8px;top:47.7px;font-size:11.5px;color:#e4e4e6">Details</div>
<div class="t g" style="left:956.6px;top:90.8px;font-size:11.5px;letter-spacing:0.37px">Name:</div>
<div class="t g" style="left:956.6px;top:120.3px;font-size:11.5px;letter-spacing:-0.01px">Saved:</div>
<div class="t g" style="left:956.6px;top:180.3px;font-size:11.5px;letter-spacing:0.12px">Ratio:</div>
<div class="t g" style="left:956.6px;top:210.3px;font-size:11.5px;letter-spacing:0.18px">Resolution:</div>
<div class="t g" style="left:956.6px;top:239.8px;font-size:11.5px;letter-spacing:0.26px">Color space:</div>
<div class="t g" style="left:956.6px;top:269.5px;font-size:11.5px;letter-spacing:0.19px">Frame rate:</div>
<div class="t g" style="left:956.6px;top:299.5px;font-size:11.5px;letter-spacing:0.47px">Import material:</div>
<div class="t" style="left:1057.2px;top:90.8px;font-size:11.5px;color:#dcdcde;letter-spacing:0.12px">0412 (1)</div>
<div class="t" style="left:1057.2px;top:120.3px;font-size:11.5px;color:#dcdcde;letter-spacing:0.25px">C:/Users/USER/AppData/Local/</div>
<div class="t" style="left:1057.2px;top:134.8px;font-size:11.5px;color:#dcdcde;letter-spacing:0.31px">CapCut/User Data/Projects/</div>
<div class="t" style="left:1057.2px;top:149.8px;font-size:11.5px;color:#dcdcde;letter-spacing:0.33px">com.lveditor.draft/0412 (1)</div>
<div class="t" style="left:1057.2px;top:180.3px;font-size:11.5px;color:#dcdcde;letter-spacing:0.36px">Original</div>
<div class="t" style="left:1057.2px;top:210.3px;font-size:11.5px;color:#dcdcde;letter-spacing:0.41px">Adapted</div>
<div class="t" style="left:1057.2px;top:239.8px;font-size:11.5px;color:#dcdcde;letter-spacing:-0.08px">SDR - Rec.709</div>
<div class="t" style="left:1057.2px;top:269.5px;font-size:11.5px;color:#dcdcde;letter-spacing:0.17px">30.00fps</div>
<div class="t" style="left:1057.2px;top:299.5px;font-size:11.5px;color:#dcdcde;letter-spacing:0.38px">Keep in original place</div>
<div class="btn" style="left:1189px;top:349px;width:67px;height:19px;background:#4a4a4e;border-radius:3px"></div>
<div class="t b" style="left:1202px;top:353px;font-size:12.8px">Modify</div>
<!-- SECTION:TIMELINE -->
<div class="p" style="left:9px;top:381px;width:1258px;height:289px;background:#1b1b1c">
<div class="hd" style="height:30px;background:#28282b"></div>
<div class="abs" style="left:103px;top:30px;width:1px;height:259px;background:#232325"></div>
<div class="abs" style="left:151px;top:126px;width:1103px;height:71px;background:#1f1f20"></div>
</div>
<!-- toolbar icons -->
<svg style="left:18px;top:389px" width="12" height="15" viewBox="0 0 12 15"><path d="M1 1v10.6l3-2.4 1.9 4.3 2-.9-1.9-4.2 4.2-.3z" fill="none" stroke="#ececee" stroke-width="1.4" stroke-linejoin="round"/></svg>
<svg style="left:41px;top:395px" width="7" height="5" viewBox="0 0 7 5"><path d="M0.6 0.8 3.5 3.6 6.4 0.8" fill="none" stroke="#b8b8bb" stroke-width="1.2"/></svg>
<div class="abs" style="left:61px;top:389px;width:1px;height:14px;background:#3a3a3d"></div>
<svg style="left:74px;top:390px" width="12" height="12" viewBox="0 0 12 12"><path d="M1 2.6h6.2a3.9 3.9 0 0 1 0 7.8H2.4M3.6 0.3 1 2.6 3.6 5" fill="none" stroke="#ececee" stroke-width="1.4"/></svg>
<svg style="left:111px;top:390px" width="12" height="12" viewBox="0 0 12 12"><path d="M11 2.6H4.8a3.9 3.9 0 0 0 0 7.8h4.8M8.4 0.3 11 2.6 8.4 5" fill="none" stroke="#3a3a3d" stroke-width="1.4"/></svg>
<svg style="left:149px;top:389px" width="10" height="13" viewBox="0 0 10 13" fill="none" stroke="#ececee" stroke-width="1.5"><path d="M0.4 0.8h3v11.4h-3M9.6 0.8h-3v11.4h3"/></svg>
<svg style="left:187px;top:389px" width="10" height="13" viewBox="0 0 10 13" fill="none" stroke="#ececee" stroke-width="1.5"><path d="M0.4 0.8h3v11.4h-3" stroke-dasharray="1.2 1" stroke-width="1.2"/><path d="M9.6 0.8h-3v11.4h3"/></svg>
<svg style="left:224px;top:389px" width="10" height="13" viewBox="0 0 10 13" fill="none" stroke="#ececee" stroke-width="1.5"><path d="M0.4 0.8h3v11.4h-3"/><path d="M9.6 0.8h-3v11.4h3" stroke-dasharray="1.2 1" stroke-width="1.2"/></svg>
<svg style="left:260px;top:389px" width="12" height="13" viewBox="0 0 12 13" fill="none" stroke="#353538" stroke-width="1.3"><path d="M0.4 2.4h11.2M3.8 2.2V0.7h4.4v1.5M1.8 2.6v9.6h8.4V2.6"/></svg>
<svg style="left:897px;top:388px" width="12" height="16" viewBox="0 0 12 16" fill="none" stroke="#ececee" stroke-width="1.3"><rect x="3.4" y="0.7" width="5.2" height="9" rx="2.2"/><path d="M6 4.4v3.4M0.8 7.2v2q0 2.6 2.6 2.6h5.2q2.6 0 2.6-2.6v-2M6 11.8v3M2.8 15h6.4"/></svg>
<div class="abs" style="left:929px;top:389px;width:1px;height:14px;background:#3a3a3d"></div>
<div class="btn" style="left:945px;top:385px;width:23px;height:22px;background:#161618;border-radius:4px"></div>
<div class="btn" style="left:982px;top:385px;width:23px;height:22px;background:#161618;border-radius:4px"></div>
<div class="btn" style="left:1020px;top:385px;width:23px;height:22px;background:#161618;border-radius:4px"></div>
<svg style="left:948px;top:392px" width="17" height="8" viewBox="0 0 17 8"><rect x="0" y="0.5" width="4.4" height="7" fill="#14bdcb"/><rect x="9.6" y="1.3" width="6.6" height="5.4" fill="none" stroke="#14bdcb" stroke-width="1.6"/><path d="M5.2 4 8 1.8v4.4z" fill="#14bdcb"/><path d="M7.4 4H10" stroke="#14bdcb" stroke-width="1.2"/></svg>
<svg style="left:985px;top:386px" width="17" height="20" viewBox="0 0 17 20"><rect x="0" y="6.4" width="17" height="7" fill="#14bdcb"/><rect x="7.6" y="7.6" width="1.8" height="4.6" fill="#0b5a62"/><path d="M8.5 1v2.6M4 2.2l1.4 2M13 2.2l-1.4 2M8.5 19v-2.6M4 17.8l1.4-2M13 17.8l-1.4-2" stroke="#14bdcb" stroke-width="1.2"/></svg>
<svg style="left:1023px;top:392px" width="17" height="8" viewBox="0 0 17 8"><rect x="0" y="0.4" width="17" height="7.2" fill="#14bdcb"/><path d="M7 2.4H4.4v3.2H7M10 2.4h2.6v3.2H10M6.4 4h4.2" fill="none" stroke="#0b3a40" stroke-width="1.1"/></svg>
<svg style="left:1060px;top:389px" width="17" height="14" viewBox="0 0 17 14" fill="none" stroke="#ececee" stroke-width="1.5"><path d="M8.5 0v14M6 3.8H0.8v6.4H6M11 3.8h5.2v6.4H11"/></svg>
<div class="abs" style="left:1087px;top:389px;width:1px;height:14px;background:#333336"></div>
<svg style="left:1098px;top:390px" width="16" height="12" viewBox="0 0 16 12" fill="none" stroke="#ececee" stroke-width="1.3"><path d="M7.4 7.6H0.7V0.7h13.6V5M3.6 1v2.6M6.4 1v2M9.2 1v2.6M12 1v2"/><circle cx="11.4" cy="8" r="2.6"/><path d="M13.4 10 15.4 12"/></svg>
<svg style="left:1127px;top:390px" width="12" height="12" viewBox="0 0 12 12" fill="none" stroke="#ececee" stroke-width="1.3"><circle cx="5.8" cy="5.8" r="5"/><path d="M3.4 5.8h4.8"/></svg>
<div class="abs" style="left:1148px;top:395px;width:66px;height:2px;background:#f0f0f2"></div>
<div class="abs" style="left:1214px;top:395.5px;width:23px;height:1px;background:#3a3a3d"></div>
<div class="abs" style="left:1211px;top:390px;width:7px;height:12px;background:#f2f2f4;border-radius:2.5px"></div>
<svg style="left:1246px;top:390px" width="12" height="12" viewBox="0 0 12 12" fill="none" stroke="#ececee" stroke-width="1.3"><circle cx="5.8" cy="5.8" r="5"/><path d="M3.4 5.8h4.8M5.8 3.4v4.8"/></svg>
<!-- ruler -->
<div class="abs" style="left:165px;top:412px;width:77.5px;height:9px;background:#333335;border-radius:0 0 2px 0"></div>
<div class="t" style="left:163.5px;top:415.7px;font-size:10.4px;letter-spacing:-0.3px;color:#66666a">00:00</div>
<!-- RULER -->
<div class="abs" style="left:324.0px;top:416.5px;width:1px;height:9px;background:#59595c"></div><div class="t" style="left:329.0px;top:416px;font-size:10px;color:#5c5c60">2f</div>
<div class="abs" style="left:489.3px;top:416.5px;width:1px;height:9px;background:#59595c"></div><div class="t" style="left:494.3px;top:416px;font-size:10px;color:#5c5c60">4f</div>
<div class="abs" style="left:654.6px;top:416.5px;width:1px;height:9px;background:#59595c"></div><div class="t" style="left:659.6px;top:416px;font-size:10px;color:#5c5c60">6f</div>
<div class="abs" style="left:819.9px;top:416.5px;width:1px;height:9px;background:#59595c"></div><div class="t" style="left:824.9px;top:416px;font-size:10px;color:#5c5c60">8f</div>
<div class="abs" style="left:985.2px;top:416.5px;width:1px;height:9px;background:#59595c"></div><div class="t" style="left:990.2px;top:416px;font-size:10px;color:#5c5c60">10f</div>
<div class="abs" style="left:1150.5px;top:416.5px;width:1px;height:9px;background:#59595c"></div><div class="t" style="left:1155.5px;top:416px;font-size:10px;color:#5c5c60">12f</div>
<div class="abs" style="left:406.6px;top:416px;width:1px;height:5px;background:#3a3a3d"></div>
<div class="abs" style="left:572.0px;top:416px;width:1px;height:5px;background:#3a3a3d"></div>
<div class="abs" style="left:737.2px;top:416px;width:1px;height:5px;background:#3a3a3d"></div>
<div class="abs" style="left:902.6px;top:416px;width:1px;height:5px;background:#3a3a3d"></div>
<div class="abs" style="left:1067.9px;top:416px;width:1px;height:5px;background:#3a3a3d"></div>
<div class="abs" style="left:1233.2px;top:416px;width:1px;height:5px;background:#3a3a3d"></div>
<!-- clip -->
<div class="abs" style="left:160px;top:509px;width:825px;height:67px;background:#004b52;border-radius:2px 4px 4px 2px"></div>
<div class="abs" style="left:160px;top:525.5px;width:825px;height:35.5px;background:#fff"></div>
<div class="abs" style="left:164px;top:512px;width:122px;height:12px;background:#15616a;border-radius:1px"></div>
<div class="abs" style="left:288px;top:512px;width:60px;height:12px;background:#15616a;border-radius:1px"></div>
<div class="t" style="left:165.5px;top:513.4px;font-size:9.95px;color:#f4f4f6">RACE OF THE YEAR.mp4</div>
<div class="t" style="left:291.5px;top:513.4px;font-size:9.95px;color:#f4f4f6">00:00:00:10</div>
<!-- THUMBS -->
<svg style="left:159px;top:525.5px;overflow:hidden" width="826" height="35.5" viewBox="0 0 826 35.5" fill="none">
<g transform="translate(0 0)" stroke="#d6d6d6" stroke-width="0.75"><ellipse cx="23.4" cy="10.8" rx="3" ry="2.6"/><path d="M23.6 13.4V24M20 16.6l3.6 1.6 2.6-2.2M23.6 20.6q-3 1.4-3.2 4.2M23.6 20.6q2.6 1.6 4 4.2"/></g>
<g transform="translate(47 0)" stroke="#d6d6d6" stroke-width="0.75"><ellipse cx="23.4" cy="10.8" rx="3" ry="2.6"/><path d="M23.6 13.4V24M20 16.6l3.6 1.6 2.6-2.2M23.6 20.6q-3 1.4-3.2 4.2M23.6 20.6q2.6 1.6 4 4.2"/></g>
<g transform="translate(94 0)" stroke="#d6d6d6" stroke-width="0.75"><ellipse cx="23.4" cy="10.8" rx="3" ry="2.6"/><path d="M23.6 13.4V24M20 16.6l3.6 1.6 2.6-2.2M23.6 20.6q-3 1.4-3.2 4.2M23.6 20.6q2.6 1.6 4 4.2"/></g>
<g transform="translate(141 0)" stroke="#d6d6d6" stroke-width="0.75"><ellipse cx="23.4" cy="10.8" rx="3" ry="2.6"/><path d="M23.6 13.4V24M20 16.6l3.6 1.6 2.6-2.2M23.6 20.6q-3 1.4-3.2 4.2M23.6 20.6q2.6 1.6 4 4.2"/></g>
<g transform="translate(188 0)" stroke="#d6d6d6" stroke-width="0.75"><ellipse cx="23.4" cy="10.8" rx="3" ry="2.6"/><path d="M23.6 13.4V24M20 16.6l3.6 1.6 2.6-2.2M23.6 20.6q-3 1.4-3.2 4.2M23.6 20.6q2.6 1.6 4 4.2"/></g>
<g transform="translate(235 0)" stroke="#d6d6d6" stroke-width="0.75"><ellipse cx="23.4" cy="10.8" rx="3" ry="2.6"/><path d="M23.6 13.4V24M20 16.6l3.6 1.6 2.6-2.2M23.6 20.6q-3 1.4-3.2 4.2M23.6 20.6q2.6 1.6 4 4.2"/></g>
<g transform="translate(282 0)" stroke="#b4b4b4" stroke-width="0.7"><path d="M14 12.8h16M13.5 18.8h17.5M13.5 25.2h18"/><path d="M17.8 11v14.5" stroke="#a0a0a0"/><path d="M14.5 12.8l2-2 2 2M23 13.6l1.5 1.2 1.5-1.2M16.5 18v1.6h2.5V18M14 24.4h4v1.2h-4zM22.5 22h1M29.5 22h1" stroke="#a8a8a8"/></g>
<g transform="translate(329 0)" stroke="#b4b4b4" stroke-width="0.7"><path d="M14 12.8h16M13.5 18.8h17.5M13.5 25.2h18"/><path d="M17.8 11v14.5" stroke="#a0a0a0"/><path d="M14.5 12.8l2-2 2 2M23 13.6l1.5 1.2 1.5-1.2M16.5 18v1.6h2.5V18M14 24.4h4v1.2h-4zM22.5 22h1M29.5 22h1" stroke="#a8a8a8"/></g>
<g transform="translate(376 0)" stroke="#b4b4b4" stroke-width="0.7"><path d="M14 12.8h16M13.5 18.8h17.5M13.5 25.2h18"/><path d="M17.8 11v14.5" stroke="#a0a0a0"/><path d="M14.5 12.8l2-2 2 2M23 13.6l1.5 1.2 1.5-1.2M16.5 18v1.6h2.5V18M14 24.4h4v1.2h-4zM22.5 22h1M29.5 22h1" stroke="#a8a8a8"/></g>
<g transform="translate(423 0)" stroke="#b4b4b4" stroke-width="0.7"><path d="M14 12.8h16M13.5 18.8h17.5M13.5 25.2h18"/><path d="M17.8 11v14.5" stroke="#a0a0a0"/><path d="M14.5 12.8l2-2 2 2M23 13.6l1.5 1.2 1.5-1.2M16.5 18v1.6h2.5V18M14 24.4h4v1.2h-4zM22.5 22h1M29.5 22h1" stroke="#a8a8a8"/></g>
<g transform="translate(470 0)" stroke="#b4b4b4" stroke-width="0.7"><path d="M14 12.8h16M13.5 18.8h17.5M13.5 25.2h18"/><path d="M17.8 11v14.5" stroke="#a0a0a0"/><path d="M14.5 12.8l2-2 2 2M23 13.6l1.5 1.2 1.5-1.2M16.5 18v1.6h2.5V18M14 24.4h4v1.2h-4zM22.5 22h1M29.5 22h1" stroke="#a8a8a8"/></g>
<g transform="translate(517 0)" stroke="#b4b4b4" stroke-width="0.7"><path d="M14 12.8h16M13.5 18.8h17.5M13.5 25.2h18"/><path d="M17.8 11v14.5" stroke="#a0a0a0"/><path d="M14.5 12.8l2-2 2 2M23 13.6l1.5 1.2 1.5-1.2M16.5 18v1.6h2.5V18M14 24.4h4v1.2h-4zM22.5 22h1M29.5 22h1" stroke="#a8a8a8"/></g>
<g transform="translate(564 0)" stroke="#b4b4b4" stroke-width="0.7"><path d="M14 12.8h16M13.5 18.8h17.5M13.5 25.2h18"/><path d="M17.8 11v14.5" stroke="#a0a0a0"/><path d="M14.5 12.8l2-2 2 2M23 13.6l1.5 1.2 1.5-1.2M16.5 18v1.6h2.5V18M14 24.4h4v1.2h-4zM22.5 22h1M29.5 22h1" stroke="#a8a8a8"/></g>
<g transform="translate(611 -6.6) scale(1.46 1.38) translate(-8.6 0)" stroke="#c2c2c2" stroke-width="0.5"><path d="M13.5 14.5q4-5.5 8 0 1.5 1.5 3-.2l3-2.3M27 10.8q4-1.6 7 .6l1.5 3M12.5 19.4h13q1.8-.2 3-1.6 1.5-1 3.6 0l1.6 1.5M13.5 24.2h6M22 24.2h14.5M18.5 21.6h5M22.6 21v2.4"/></g>
<g transform="translate(658 -6.6) scale(1.46 1.38) translate(-8.6 0)" stroke="#c2c2c2" stroke-width="0.5"><path d="M13.5 14.5q4-5.5 8 0 1.5 1.5 3-.2l3-2.3M27 10.8q4-1.6 7 .6l1.5 3M12.5 19.4h13q1.8-.2 3-1.6 1.5-1 3.6 0l1.6 1.5M13.5 24.2h6M22 24.2h14.5M18.5 21.6h5M22.6 21v2.4"/></g>
<g transform="translate(705 0)"><path d="M1.6 11.6L2.8 17.6L3.8 12.0L4.3 16.4L6.1 11.4L7.1 15.6L7.8 10.4L9.0 16.7L9.6 10.3L10.9 17.5L12.3 10.2L13.4 15.6L14.3 10.1L14.9 17.4L16.1 10.3L17.8 17.4L18.3 12.1L19.6 16.9L20.3 12.1L21.8 17.6L23.0 10.5L23.6 15.7L24.5 10.0L25.7 16.7L26.5 11.4L27.9 16.0" stroke="#8a8a8a" stroke-width="0.65" fill="none"/><path d="M10.3 14.0L11.3 18.5L13.1 12.9L14.8 17.4L16.1 14.8L17.0 19.2L18.8 14.2L20.0 17.4L21.6 15.1L23.1 19.1L25.1 15.1L26.1 18.2L27.8 14.7L28.9 19.1L30.9 14.9L31.8 19.6L33.3 13.6L35.2 19.5L36.5 15.0L38.1 18.0L39.4 13.2L40.7 17.7L42.7 15.2L43.7 17.4" stroke="#9a9a9a" stroke-width="0.6" fill="none"/><path d="M1.9 27.6L2.7 32.4L4.0 28.3L5.1 32.8L6.1 28.5L7.3 33.0L9.1 26.6L10.3 34.1L11.4 28.2L12.2 32.8L13.5 28.3L14.8 32.9L16.6 28.3L17.8 32.9L18.7 28.1L19.9 32.5L21.1 26.7L22.3 34.2L24.0 27.8L24.8 32.6L25.7 27.0L27.5 33.9L28.4 28.2L29.9 33.5L31.1 28.1L32.1 33.5L33.2 27.5L34.9 33.5L35.7 28.6L37.2 33.2L37.9 27.6L39.3 33.4L40.7 28.3L42.1 33.7" stroke="#8a8a8a" stroke-width="0.65" fill="none"/><path d="M2.9 27.3L5.0 32.3L6.4 27.8L8.6 32.0L10.5 28.1L11.9 31.6L13.3 27.8L15.7 31.4L17.3 27.5L19.1 30.7L20.9 27.2L22.6 31.3L24.3 27.7L26.1 32.0" stroke="#a6a6a6" stroke-width="0.6" fill="none"/><path d="M5.6 19.7L9.3 24.9L12.5 20.9L16.2 23.4L19.4 19.8L22.5 23.6L26.0 19.7L29.3 23.4L32.9 20.2L36.4 24.7L39.4 21.5L42.6 24.3" stroke="#cacaca" stroke-width="0.6" fill="none"/><rect x="28" y="8" width="15.5" height="6.4" rx="1" stroke="#969696" stroke-width="0.7" fill="none"/><path d="M30 10.5h11" stroke="#c4a0a0" stroke-width="0.6"/><path d="M0.5 18.8h34M1 33.8h30" stroke="#a8a8a8" stroke-width="0.6"/><path d="M13 6.5l4 1.5M14 8.5l3-.500" stroke="#8c8c8c" stroke-width="0.7"/><path d="M6 20v5M20 20.5v4.5M42 17v9" stroke="#a8a8a8" stroke-width="0.6"/></g>
<g transform="translate(752 0)"><path d="M1.6 11.6L2.8 17.6L3.8 12.0L4.3 16.4L6.1 11.4L7.1 15.6L7.8 10.4L9.0 16.7L9.6 10.3L10.9 17.5L12.3 10.2L13.4 15.6L14.3 10.1L14.9 17.4L16.1 10.3L17.8 17.4L18.3 12.1L19.6 16.9L20.3 12.1L21.8 17.6L23.0 10.5L23.6 15.7L24.5 10.0L25.7 16.7L26.5 11.4L27.9 16.0" stroke="#8a8a8a" stroke-width="0.65" fill="none"/><path d="M10.3 14.0L11.3 18.5L13.1 12.9L14.8 17.4L16.1 14.8L17.0 19.2L18.8 14.2L20.0 17.4L21.6 15.1L23.1 19.1L25.1 15.1L26.1 18.2L27.8 14.7L28.9 19.1L30.9 14.9L31.8 19.6L33.3 13.6L35.2 19.5L36.5 15.0L38.1 18.0L39.4 13.2L40.7 17.7L42.7 15.2L43.7 17.4" stroke="#9a9a9a" stroke-width="0.6" fill="none"/><path d="M1.9 27.6L2.7 32.4L4.0 28.3L5.1 32.8L6.1 28.5L7.3 33.0L9.1 26.6L10.3 34.1L11.4 28.2L12.2 32.8L13.5 28.3L14.8 32.9L16.6 28.3L17.8 32.9L18.7 28.1L19.9 32.5L21.1 26.7L22.3 34.2L24.0 27.8L24.8 32.6L25.7 27.0L27.5 33.9L28.4 28.2L29.9 33.5L31.1 28.1L32.1 33.5L33.2 27.5L34.9 33.5L35.7 28.6L37.2 33.2L37.9 27.6L39.3 33.4L40.7 28.3L42.1 33.7" stroke="#8a8a8a" stroke-width="0.65" fill="none"/><path d="M2.9 27.3L5.0 32.3L6.4 27.8L8.6 32.0L10.5 28.1L11.9 31.6L13.3 27.8L15.7 31.4L17.3 27.5L19.1 30.7L20.9 27.2L22.6 31.3L24.3 27.7L26.1 32.0" stroke="#a6a6a6" stroke-width="0.6" fill="none"/><path d="M5.6 19.7L9.3 24.9L12.5 20.9L16.2 23.4L19.4 19.8L22.5 23.6L26.0 19.7L29.3 23.4L32.9 20.2L36.4 24.7L39.4 21.5L42.6 24.3" stroke="#cacaca" stroke-width="0.6" fill="none"/><rect x="28" y="8" width="15.5" height="6.4" rx="1" stroke="#969696" stroke-width="0.7" fill="none"/><path d="M30 10.5h11" stroke="#c4a0a0" stroke-width="0.6"/><path d="M0.5 18.8h34M1 33.8h30" stroke="#a8a8a8" stroke-width="0.6"/><path d="M13 6.5l4 1.5M14 8.5l3-.500" stroke="#8c8c8c" stroke-width="0.7"/><path d="M6 20v5M20 20.5v4.5M42 17v9" stroke="#a8a8a8" stroke-width="0.6"/></g>
<g transform="translate(799 0)"><path d="M1.6 11.6L2.8 17.6L3.8 12.0L4.3 16.4L6.1 11.4L7.1 15.6L7.8 10.4L9.0 16.7L9.6 10.3L10.9 17.5L12.3 10.2L13.4 15.6L14.3 10.1L14.9 17.4L16.1 10.3L17.8 17.4L18.3 12.1L19.6 16.9L20.3 12.1L21.8 17.6L23.0 10.5L23.6 15.7L24.5 10.0L25.7 16.7L26.5 11.4L27.9 16.0" stroke="#8a8a8a" stroke-width="0.65" fill="none"/><path d="M10.3 14.0L11.3 18.5L13.1 12.9L14.8 17.4L16.1 14.8L17.0 19.2L18.8 14.2L20.0 17.4L21.6 15.1L23.1 19.1L25.1 15.1L26.1 18.2L27.8 14.7L28.9 19.1L30.9 14.9L31.8 19.6L33.3 13.6L35.2 19.5L36.5 15.0L38.1 18.0L39.4 13.2L40.7 17.7L42.7 15.2L43.7 17.4" stroke="#9a9a9a" stroke-width="0.6" fill="none"/><path d="M1.9 27.6L2.7 32.4L4.0 28.3L5.1 32.8L6.1 28.5L7.3 33.0L9.1 26.6L10.3 34.1L11.4 28.2L12.2 32.8L13.5 28.3L14.8 32.9L16.6 28.3L17.8 32.9L18.7 28.1L19.9 32.5L21.1 26.7L22.3 34.2L24.0 27.8L24.8 32.6L25.7 27.0L27.5 33.9L28.4 28.2L29.9 33.5L31.1 28.1L32.1 33.5L33.2 27.5L34.9 33.5L35.7 28.6L37.2 33.2L37.9 27.6L39.3 33.4L40.7 28.3L42.1 33.7" stroke="#8a8a8a" stroke-width="0.65" fill="none"/><path d="M2.9 27.3L5.0 32.3L6.4 27.8L8.6 32.0L10.5 28.1L11.9 31.6L13.3 27.8L15.7 31.4L17.3 27.5L19.1 30.7L20.9 27.2L22.6 31.3L24.3 27.7L26.1 32.0" stroke="#a6a6a6" stroke-width="0.6" fill="none"/><path d="M5.6 19.7L9.3 24.9L12.5 20.9L16.2 23.4L19.4 19.8L22.5 23.6L26.0 19.7L29.3 23.4L32.9 20.2L36.4 24.7L39.4 21.5L42.6 24.3" stroke="#cacaca" stroke-width="0.6" fill="none"/><rect x="28" y="8" width="15.5" height="6.4" rx="1" stroke="#969696" stroke-width="0.7" fill="none"/><path d="M30 10.5h11" stroke="#c4a0a0" stroke-width="0.6"/><path d="M0.5 18.8h34M1 33.8h30" stroke="#a8a8a8" stroke-width="0.6"/><path d="M13 6.5l4 1.5M14 8.5l3-.500" stroke="#8c8c8c" stroke-width="0.7"/><path d="M6 20v5M20 20.5v4.5M42 17v9" stroke="#a8a8a8" stroke-width="0.6"/></g>
</svg>
<!-- track controls -->
<div class="abs" style="left:13px;top:531px;width:92px;height:23px;background:#202022;border-radius:3px"></div>
<svg style="left:19.5px;top:538px" width="12" height="10" viewBox="0 0 12 10"><rect x="0.6" y="0.6" width="10.4" height="8.4" fill="none" stroke="#9a9a9d" stroke-width="1"/><path d="M4.6 3v3.6L7.4 4.8z" fill="#9a9a9d"/></svg>
<div class="abs" style="left:40px;top:535px;width:15px;height:15px;border-radius:8px;background:#2c2c2f"></div>
<div class="abs" style="left:62.5px;top:535px;width:15px;height:15px;border-radius:8px;background:#2c2c2f"></div>
<div class="abs" style="left:85px;top:535px;width:15px;height:15px;border-radius:8px;background:#2c2c2f"></div>
<svg style="left:43.5px;top:538px" width="8" height="9" viewBox="0 0 8 9"><rect x="0.3" y="3.8" width="7.4" height="5" rx="0.8" fill="#f0f0f2"/><path d="M2 4V2.6a2 2 0 0 1 4 0V4" fill="none" stroke="#f0f0f2" stroke-width="1.2"/><rect x="3" y="5.6" width="2" height="1.4" fill="#2c2c2f"/></svg>
<svg style="left:65px;top:539px" width="10" height="7" viewBox="0 0 10 7"><path d="M0.2 3.5Q5-2.4 9.8 3.5 5 9.4 0.2 3.5z" fill="#f0f0f2"/><circle cx="5" cy="3.5" r="1.7" fill="#2c2c2f"/><circle cx="5" cy="3.5" r="0.8" fill="#f0f0f2"/></svg>
<svg style="left:88px;top:538px" width="10" height="9" viewBox="0 0 10 9"><path d="M0.6 3h1.6L4.6 0.8v7.4L2.2 6H0.6z" fill="none" stroke="#f0f0f2" stroke-width="1.1" stroke-linejoin="round"/><path d="M6.2 2.6v3.8M8 1.6q1.6 2.9 0 5.8" fill="none" stroke="#f0f0f2" stroke-width="1.1"/></svg>
<!-- cover -->
<div class="abs" style="left:117px;top:525px;width:35px;height:35px;background:#2a2a2c;border-radius:3px;border:1px dashed #3a3a3d"></div>
<svg style="left:130px;top:531px" width="10" height="12" viewBox="0 0 10 12" fill="none" stroke="#f0f0f2" stroke-width="1.2"><path d="M1.8 7.8 2.4 5.4 6.6 1 8.6 3 4.4 7.4z" stroke-linejoin="round"/><path d="M0.5 10.6h8.5"/></svg>
<div class="t" style="left:120.5px;top:545px;font-size:11px;color:#f0f0f2">Cover</div>
<!-- playhead -->
<div class="abs" style="left:158.9px;top:420px;width:2px;height:237px;background:#b4b4b6"></div>
<div class="abs" style="left:154.9px;top:412px;width:9.6px;height:12.6px;border:2px solid #f4f4f6;border-radius:2px 2px 5px 5px;background:#1b1b1c"></div>
<!-- scrollbar -->
<div class="abs" style="left:115px;top:662.3px;width:1080px;height:6px;background:#333336;border-radius:3px"></div>
</div>
</body>
</html>
